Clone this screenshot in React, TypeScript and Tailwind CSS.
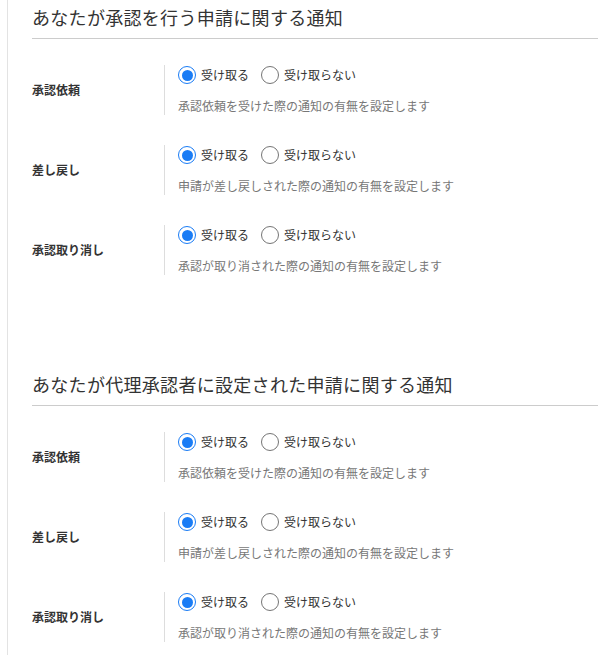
import { useState } from 'react'

type Choice = 'on' | 'off'

interface RowDef {
  key: string
  label: string
  description: string
}

const ROWS: RowDef[] = [
  { key: 'request', label: '承認依頼', description: '承認依頼を受けた際の通知の有無を設定します' },
  { key: 'returned', label: '差し戻し', description: '申請が差し戻しされた際の通知の有無を設定します' },
  { key: 'cancelled', label: '承認取り消し', description: '承認が取り消された際の通知の有無を設定します' },
]

function Radio({ checked, label, onClick }: { checked: boolean; label: string; onClick: () => void }) {
  return (
    <button type="button" onClick={onClick} className="flex items-center gap-[5px] h-5">
      <span
        className={`w-[18px] h-[18px] rounded-full border-[1.5px] flex items-center justify-center bg-white ${
          checked ? 'border-[#1a7cf5]' : 'border-[#757575]'
        }`}
      >
        {checked && <span className="w-[11px] h-[11px] rounded-full bg-[#1a7cf5]" />}
      </span>
      <span className="text-[12px] leading-5 text-[#333]">{label}</span>
    </button>
  )
}

function SettingRow({ row }: { row: RowDef }) {
  const [value, setValue] = useState<Choice>('on')
  return (
    <div className="flex">
      <div className="w-[132px] flex items-center text-[12px] font-bold text-[#333]">{row.label}</div>
      <div className="border-l border-[#dddddd] pl-[13px] h-[50px]">
        <div className="flex items-center gap-[12px]">
          <Radio checked={value === 'on'} label="受け取る" onClick={() => setValue('on')} />
          <Radio checked={value === 'off'} label="受け取らない" onClick={() => setValue('off')} />
        </div>
        <p className="mt-[12px] text-[12px] leading-[18px] text-[#777]">{row.description}</p>
      </div>
    </div>
  )
}

function Section({ title }: { title: string }) {
  return (
    <section>
      <h2 className="pt-1 pb-2 text-[18px] leading-[26px] text-[#333] border-b border-[#cccccc] tracking-[0.3px]">
        {title}
      </h2>
      <div className="mt-[26px] flex flex-col gap-[30px]">
        {ROWS.map((row) => (
          <SettingRow key={row.key} row={row} />
        ))}
      </div>
    </section>
  )
}

export default function App() {
  return (
    <div
      className="min-h-screen bg-white"
      style={{ fontFamily: '"Noto Sans CJK JP", "Noto Sans", sans-serif' }}
    >
      <div className="ml-[7px] border-l border-[#e3e3e3] min-h-[655px] pl-6 flex flex-col gap-[92px]">
        <Section title="あなたが承認を行う申請に関する通知" />
        <Section title="あなたが代理承認者に設定された申請に関する通知" />
      </div>
    </div>
  )
}
